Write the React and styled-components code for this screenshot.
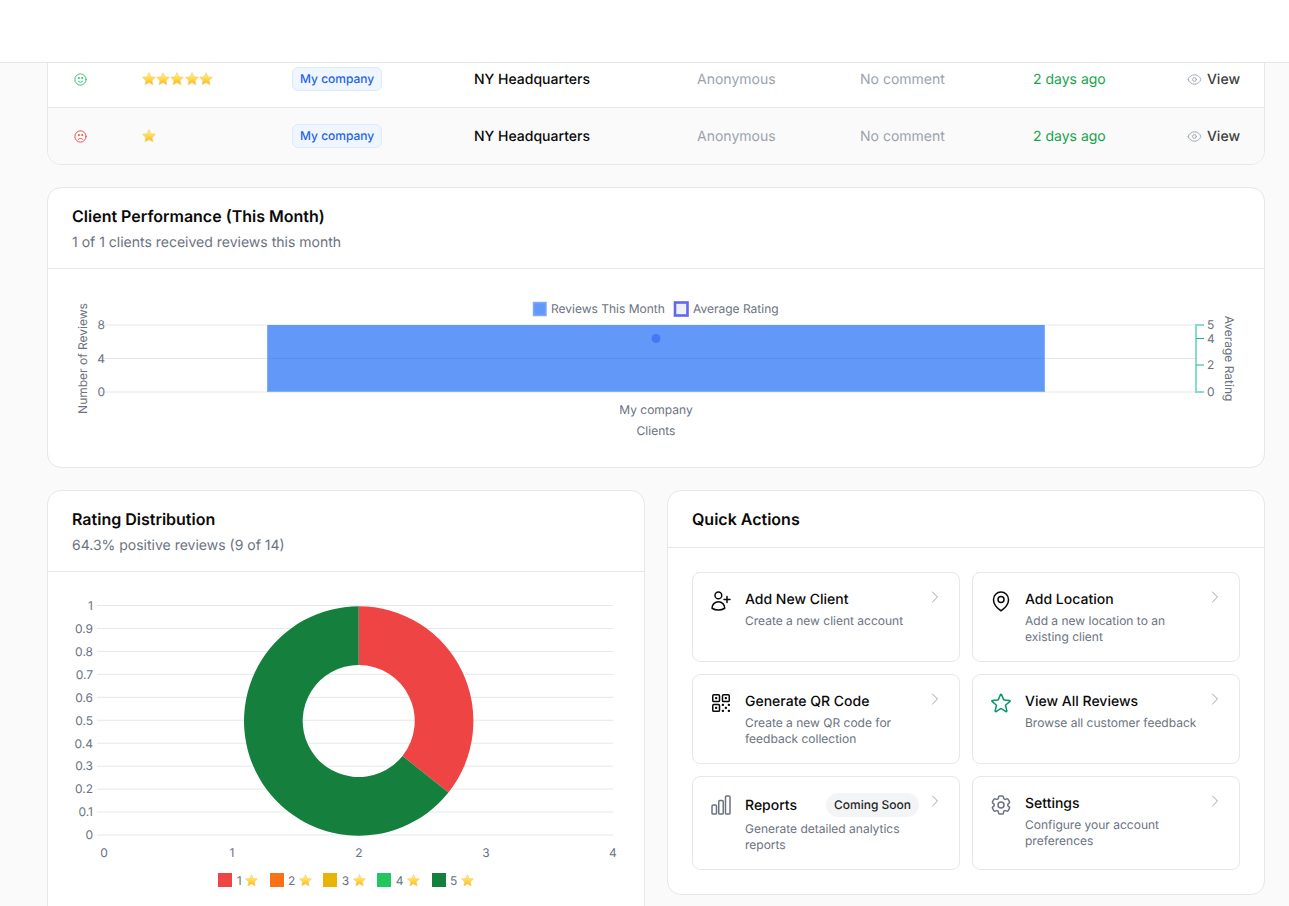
import React, { useId } from "react";
import styled, { createGlobalStyle } from "styled-components";
import {
  HiOutlineUserPlus,
  HiOutlineMapPin,
  HiOutlineQrCode,
  HiOutlineStar,
  HiOutlineChartBar,
  HiOutlineCog6Tooth,
  HiOutlineChevronRight,
  HiOutlineEye,
  HiOutlineFaceSmile,
  HiOutlineFaceFrown,
} from "react-icons/hi2";

const GlobalStyle = createGlobalStyle`
  html, body {
    margin: 0;
    height: 906px;
    overflow: hidden;
    background: #fafafa;
    font-family: Inter, "Liberation Sans", sans-serif;
    color: #0a0a0a;
    text-rendering: geometricPrecision;
    -webkit-font-smoothing: antialiased;
  }
  * {
    box-sizing: border-box;
  }
`;

const Star = ({ size = 14 }) => {
  const id = useId();
  return (
    <StarSvg viewBox="0 0 24 24" width={size} height={size}>
      <defs>
        <linearGradient id={id} x1="0" y1="0" x2="0" y2="1">
          <stop offset="0" stopColor="#fff2a8" />
          <stop offset="0.55" stopColor="#ffd83d" />
          <stop offset="1" stopColor="#fdac1e" />
        </linearGradient>
      </defs>
      <path
        d="M12 1l3.3 7.2 7.7.9-5.7 5.3 1.5 7.6L12 18.2l-6.8 3.8 1.5-7.6L1 9.1l7.7-.9z"
        fill={`url(#${id})`}
        stroke="#f8cf7e"
        strokeWidth="1.3"
        strokeLinejoin="round"
      />
    </StarSvg>
  );
};

const ReviewRow = ({ positive, stars }) => (
  <Row $shaded={!positive}>
    <Mood $positive={positive}>
      {positive ? <HiOutlineFaceSmile /> : <HiOutlineFaceFrown />}
    </Mood>
    <Stars>
      {Array.from({ length: stars }, (_, i) => (
        <Star key={i} />
      ))}
    </Stars>
    <div>
      <ClientBadge>My company</ClientBadge>
    </div>
    <LocationName>NY Headquarters</LocationName>
    <Muted>Anonymous</Muted>
    <Muted>No comment</Muted>
    <Age>2 days ago</Age>
    <ViewLink>
      <HiOutlineEye />
      View
    </ViewLink>
  </Row>
);

const BarChart = () => (
  <ChartSvg viewBox="48 269 1216 198" width="1216" height="198">
    <rect x="533.5" y="302.5" width="12.5" height="13" fill="#6299f8" stroke="#7fabf7" strokeWidth="1.5" />
    <text x="551" y="312.5">Reviews This Month</text>
    <rect x="675" y="302.5" width="12.5" height="13" fill="#eef0fe" stroke="#6366f1" strokeWidth="2.6" />
    <text x="693" y="312.5">Average Rating</text>

    {[325, 358.5, 392].map((y) => (
      <GridLine key={y} x1="98" x2="1196" y1={y} y2={y} />
    ))}
    <rect x="267" y="325" width="778" height="67" fill="#6299f8" />
    <path d="M267.5 325v66.5h777V325" fill="none" stroke="#81aef9" />
    <line x1="268" x2="1044" y1="358.5" y2="358.5" stroke="#5a8ff0" />
    <circle cx="656" cy="338.5" r="4.5" fill="#4479f5" />

    <text x="105" y="329" textAnchor="end">8</text>
    <text x="105" y="362.5" textAnchor="end">4</text>
    <text x="105" y="396" textAnchor="end">0</text>
    <text transform="translate(87 358.5) rotate(-90)" textAnchor="middle">Number of Reviews</text>

    <path d="M1204 325h-8v67h8" fill="none" stroke="#14b8a6" strokeOpacity="0.5" strokeWidth="2" />
    <path d="M1196 338.5h8M1196 365h8" stroke="#14b8a6" />
    <text x="1207" y="329">5</text>
    <text x="1207" y="342.5">4</text>
    <text x="1207" y="369">2</text>
    <text x="1207" y="396">0</text>
    <text transform="translate(1225 358.5) rotate(90)" textAnchor="middle">Average Rating</text>

    <text x="656" y="414" textAnchor="middle">My company</text>
    <text x="656" y="435.4" textAnchor="middle">Clients</text>
  </ChartSvg>
);

const yTicks = ["0", "0.1", "0.2", "0.3", "0.4", "0.5", "0.6", "0.7", "0.8", "0.9", "1"];

const DonutChart = () => (
  <ChartSvg viewBox="48 572 596 290" width="596" height="290">
    {yTicks.map((label, i) => {
      const y = 835 - i * 22.95;
      return (
        <g key={label}>
          <GridLine x1="97" x2="613" y1={y} y2={y} />
          <text x="93" y={y + 4.3} textAnchor="end">{label}</text>
        </g>
      );
    })}
    {[104, 232, 359, 486, 613].map((x, i) => (
      <text key={x} x={x} y="857" textAnchor="middle">{i}</text>
    ))}
    <path
      d="M358.7 606.3A114.7 114.7 0 0 1 448.4 792.5L402.5 755.9A56 56 0 0 0 358.7 665Z"
      fill="#ef4444"
    />
    <path
      d="M448.4 792.5A114.7 114.7 0 1 1 358.7 606.3V665A56 56 0 1 0 402.5 755.9Z"
      fill="#15803d"
    />
  </ChartSvg>
);

const legendItems = [
  { label: "1", color: "#ef4444" },
  { label: "2", color: "#f97316" },
  { label: "3", color: "#eab308" },
  { label: "4", color: "#22c55e" },
  { label: "5", color: "#15803d" },
];

const actions = [
  {
    title: "Add New Client",
    text: "Create a new client account",
    icon: <HiOutlineUserPlus />,
  },
  {
    title: "Add Location",
    text: "Add a new location to an existing client",
    icon: <HiOutlineMapPin />,
  },
  {
    title: "Generate QR Code",
    text: "Create a new QR code for feedback collection",
    icon: <HiOutlineQrCode />,
  },
  {
    title: "View All Reviews",
    text: "Browse all customer feedback",
    icon: <HiOutlineStar />,
    color: "#059669",
  },
  {
    title: "Reports",
    text: "Generate detailed analytics reports",
    icon: <HiOutlineChartBar />,
    color: "#6b7280",
    soon: true,
  },
  {
    title: "Settings",
    text: "Configure your account preferences",
    icon: <HiOutlineCog6Tooth />,
    color: "#6b7280",
  },
];

const App = () => (
  <>
    <GlobalStyle />
    <TopBar />
    <Main>
      <Card>
        <ReviewRow positive stars={5} />
        <ReviewRow stars={1} />
      </Card>

      <Card>
        <CardHeader>
          <CardTitle>Client Performance (This Month)</CardTitle>
          <CardSubtitle>1 of 1 clients received reviews this month</CardSubtitle>
        </CardHeader>
        <BarChart />
      </Card>

      <Columns>
        <Card>
          <CardHeader>
            <CardTitle>Rating Distribution</CardTitle>
            <CardSubtitle>64.3% positive reviews (9 of 14)</CardSubtitle>
          </CardHeader>
          <DonutArea>
            <DonutChart />
            <Legend>
              {legendItems.map((item) => (
                <LegendItem key={item.label}>
                  <Swatch $color={item.color} />
                  {item.label}
                  <Star size={13} />
                </LegendItem>
              ))}
            </Legend>
          </DonutArea>
        </Card>

        <Card>
          <CardHeader>
            <CardTitle>Quick Actions</CardTitle>
          </CardHeader>
          <ActionGrid>
            {actions.map((action) => (
              <ActionItem key={action.title}>
                <ActionIcon $color={action.color}>{action.icon}</ActionIcon>
                <ActionBody>
                  <ActionTitleRow>
                    <ActionTitle>{action.title}</ActionTitle>
                    {action.soon && <SoonBadge>Coming Soon</SoonBadge>}
                  </ActionTitleRow>
                  <ActionText>{action.text}</ActionText>
                </ActionBody>
                <Chevron>
                  <HiOutlineChevronRight />
                </Chevron>
              </ActionItem>
            ))}
          </ActionGrid>
        </Card>
      </Columns>
    </Main>
  </>
);

export default App;

const TopBar = styled.header`
  position: relative;
  z-index: 10;
  height: 63px;
  background: #fff;
  border-bottom: 1px solid #e5e7eb;
`;

const Main = styled.main`
  display: flex;
  flex-direction: column;
  gap: 22px;
  margin-top: -13px;
  padding: 0 24px 0 47px;
`;

const Card = styled.section`
  align-self: start;
  width: 100%;
  background: #fff;
  border: 1px solid #e5e7eb;
  border-radius: 14px;
  overflow: hidden;
`;

const Row = styled.div`
  display: grid;
  grid-template-columns: 69px 150px 182px 223px 163px 173px 1fr auto;
  align-items: center;
  height: 57px;
  padding: 0 24px 0 25px;
  background: ${(p) => (p.$shaded ? "#fafafa" : "#fff")};
  font-size: 14px;
  border-bottom: 1px solid #e5e7eb;

  &:last-child {
    height: 56px;
    border-bottom: 0;
  }
`;

const Mood = styled.span`
  display: flex;
  color: ${(p) => (p.$positive ? "#22c55e" : "#ef4444")};
  font-size: 15px;
`;

const Stars = styled.span`
  display: flex;
  gap: 0.2px;
`;

const StarSvg = styled.svg`
  display: block;
  flex-shrink: 0;
`;

const ClientBadge = styled.span`
  display: inline-block;
  padding: 3px 7px;
  background: #eff6ff;
  border: 1px solid #dbeafe;
  border-radius: 6px;
  color: #2563eb;
  font-size: 12px;
  font-weight: 500;
  line-height: 16px;
`;

const LocationName = styled.span`
  font-weight: 500;
  color: #0a0a0a;
`;

const Muted = styled.span`
  color: #9ca3af;
`;

const Age = styled.span`
  color: #16a34a;
`;

const ViewLink = styled.span`
  display: flex;
  align-items: center;
  justify-content: flex-end;
  gap: 5px;
  color: #404040;
  font-weight: 500;

  svg {
    font-size: 15px;
    color: #9ca3af;
  }
`;

const CardHeader = styled.div`
  padding: 16px 24px;
  border-bottom: 1px solid #e5e7eb;
`;

const CardTitle = styled.h2`
  margin: 0;
  font-size: 16px;
  font-weight: 600;
  line-height: 24px;
`;

const CardSubtitle = styled.p`
  margin: 4px 0 0;
  padding-top: 1px;
  color: #6b7280;
  font-size: 14px;
  line-height: 19px;
`;

const ChartSvg = styled.svg`
  display: block;

  text {
    fill: #6b7280;
    font-family: Inter, "Liberation Sans", sans-serif;
    font-size: 12px;
  }
`;

const GridLine = styled.line`
  stroke: #e5e7eb;
  stroke-width: 1;
`;

const Columns = styled.div`
  display: grid;
  grid-template-columns: 598px 598px;
  gap: 22px;
  align-items: start;
`;

const DonutArea = styled.div`
  height: 360px;
`;

const Legend = styled.div`
  display: flex;
  justify-content: center;
  gap: 11.5px;
  margin-top: 11px;
`;

const LegendItem = styled.span`
  display: flex;
  align-items: center;
  gap: 3.5px;
  height: 14px;
  color: #6b7280;
  font-size: 12px;
`;

const Swatch = styled.i`
  width: 14px;
  height: 14px;
  margin-right: 1px;
  background: ${(p) => p.$color};
`;

const ActionGrid = styled.div`
  display: grid;
  grid-template-columns: 268px 268px;
  gap: 12px;
  padding: 24px;
`;

const ActionItem = styled.div`
  display: flex;
  align-items: flex-start;
  gap: 8px;
  padding: 16px;
  background: #fff;
  border: 1px solid #e5e7eb;
  border-radius: 8px;
`;

const ActionIcon = styled.span`
  display: flex;
  flex-shrink: 0;
  margin-right: 4px;
  color: ${(p) => p.$color || "#0a0a0a"};
  font-size: 24px;
`;

const ActionBody = styled.div`
  flex: 1;
  min-width: 0;
`;

const ActionTitleRow = styled.div`
  display: flex;
  align-items: center;
  justify-content: space-between;
`;

const ActionTitle = styled.h3`
  margin: 0;
  padding-top: 1px;
  font-size: 14px;
  font-weight: 500;
  line-height: 19px;
`;

const SoonBadge = styled.span`
  padding: 4px 8px;
  background: #f3f4f6;
  border-radius: 999px;
  color: #262626;
  font-size: 12px;
  font-weight: 500;
  line-height: 16px;
  white-space: nowrap;
`;

const ActionText = styled.p`
  margin: 4px 0 0;
  color: #6b7280;
  font-size: 12px;
  line-height: 16px;
`;

const Chevron = styled.span`
  display: flex;
  flex-shrink: 0;
  color: #9ca3af;
  font-size: 16px;
`;
